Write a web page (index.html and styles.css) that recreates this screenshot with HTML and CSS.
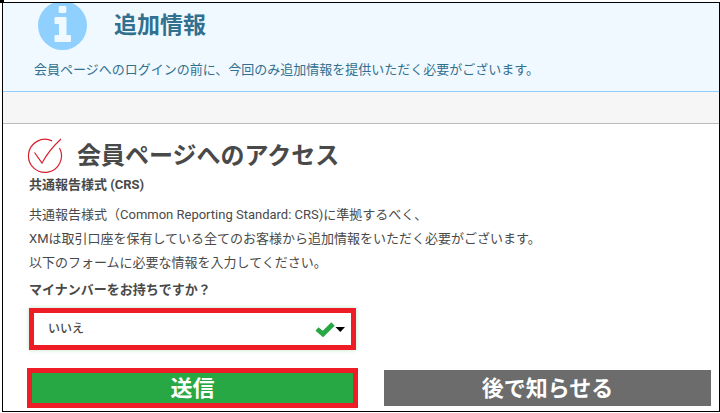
FILE: index.html
```html
<!DOCTYPE html>
<html lang="ja">

<head>
    <meta charset="UTF-8">
    <meta name="viewport" content="width=device-width, initial-scale=1.0">
    <title>会員ページへのアクセス</title>
    <link rel="stylesheet" href="styles.css">
</head>

<body>
    <div class="corner"></div>
    <div class="page">
        <header class="notice">
            <div class="notice-title">
                <svg class="info-icon" viewBox="0 0 50 50" aria-hidden="true">
                    <circle cx="24.500" cy="24.500" r="24.500" fill="#8fd0ff"/>
                    <path fill="#f0f9ff" d="M22 5h5q1.300 0 1.300 1.300v4.400q0 1.300-1.300 1.300h-5q-1.300 0-1.300-1.300V6.300Q20.700 5 22 5zM17.500 16h10q1 0 1 1v17h3.500q1 0 1 1v5q0 1-1 1H17.500q-1 0-1-1v-5q0-1 1-1H21V23h-3.500q-1 0-1-1v-5q0-1 1-1z"/>
                </svg>
                <h2>追加情報</h2>
            </div>
            <p>会員ページへのログインの前に、今回のみ追加情報を提供いただく必要がございます。</p>
        </header>
        <div class="divider"></div>

        <main class="content">
            <div class="content-title">
                <svg class="check-icon" viewBox="0 0 36 36" aria-hidden="true">
                    <path d="M25 3.900A16.500 16.500 0 1 0 32.500 11M7.500 15.500L15 26Q22 13 34 2" fill="none" stroke="#d9222f" stroke-width="1.200"/>
                </svg>
                <h1>会員ページへのアクセス</h1>
            </div>
            <h3>共通報告様式 (CRS)</h3>
            <div class="text">
                <p>共通報告様式（Common Reporting Standard: CRS)に準拠するべく、</p>
                <p>XMは取引口座を保有している全てのお客様から追加情報をいただく必要がございます。</p>
                <p>以下のフォームに必要な情報を入力してください。</p>
            </div>

            <form class="form">
                <label for="my-number">マイナンバーをお持ちですか？</label>
                <div class="select-box">
                    <select id="my-number">
                        <option>いいえ</option>
                        <option>はい</option>
                    </select>
                    <svg class="select-icons" viewBox="0 0 30 16" aria-hidden="true">
                        <path d="M2 7l6 5L18 2" fill="none" stroke="#28a745" stroke-width="4.800"/>
                        <path d="M20.500 5h9.500l-4.700 5z" fill="#000"/>
                    </svg>
                </div>
                <button class="btn btn-submit" type="submit">送信</button>
                <button class="btn btn-later" type="button">後で知らせる</button>
            </form>
        </main>
    </div>
</body>

</html>
```

FILE: styles.css
```css
* {
    box-sizing: border-box;
}

body {
    margin: 0;
    padding: 2px 0 1px 2px;
    background-color: #fff;
    color: #494949;
    font-family: Roboto, "Noto Sans CJK JP", sans-serif;
    font-size: 13px;
    line-height: 24px;
}

h1, h2, h3, p {
    margin: 0;
}

.corner {
    position: absolute;
    top: 0;
    left: 0;
    width: 4px;
    height: 3px;
    background-color: #000;
}

.page {
    border: 1px solid #000;
    overflow: hidden;
}

/* お知らせ */
.notice {
    padding: 0 30px 9px 31px;
    background-color: #f0f9ff;
    border-bottom: 1px solid #8fd0ff;
    color: #31708f;
}

.notice-title {
    display: flex;
    align-items: center;
    gap: 26px;
    height: 46px;
    margin-bottom: 9px;
    padding-left: 4px;
}

.notice-title h2 {
    font-size: 23px;
}

.info-icon {
    flex: none;
    width: 50px;
    height: 50px;
}

.divider {
    height: 32px;
    background-color: #f6f6f6;
    border-bottom: 1px solid #bbb;
}

/* 本文 */
.content {
    padding: 12px 8px 5px 24px;
}

.content-title {
    display: flex;
    align-items: center;
    gap: 14px;
}

.content-title h1 {
    padding-top: 3px;
    font-size: 24px;
    line-height: 34px;
}

.check-icon {
    flex: none;
    width: 36px;
    height: 36px;
}

.content h3,
.text,
.form {
    padding-left: 2px;
}

.content h3 {
    font-size: 13px;
}

.text {
    padding-top: 6px;
    padding-bottom: 3px;
}

.form {
    display: grid;
    grid-template-columns: 1fr 1fr;
    column-gap: 28px;
}

.form label {
    grid-column: 1 / -1;
    margin-bottom: 6px;
    font-weight: bold;
}

.select-box {
    grid-column: 1;
    position: relative;
    margin-bottom: 20px;
    box-shadow: 0 0 4px rgba(40, 167, 69, 0.3);
}

.select-box select {
    display: block;
    width: 100%;
    height: 42px;
    padding: 0 50px 0 14px;
    appearance: none;
    background-color: #fff;
    border: 5px solid #ee1c25;
    border-radius: 0;
    color: #494949;
    font-family: inherit;
    font-size: 12px;
    font-weight: 500;
}

.select-icons {
    position: absolute;
    top: 14px;
    right: 11px;
    width: 30px;
    height: 16px;
    pointer-events: none;
}

.btn {
    height: 36px;
    padding: 0 0 4px;
    border: none;
    color: #fff;
    font-family: inherit;
    font-size: 22px;
    font-weight: bold;
    cursor: pointer;
}

.btn-submit {
    grid-column: 1;
    background-color: #28a745;
    outline: 5px solid #ee1c25;
    outline-offset: -3px;
}

.btn-later {
    background-color: #6c6c6c;
}
```
